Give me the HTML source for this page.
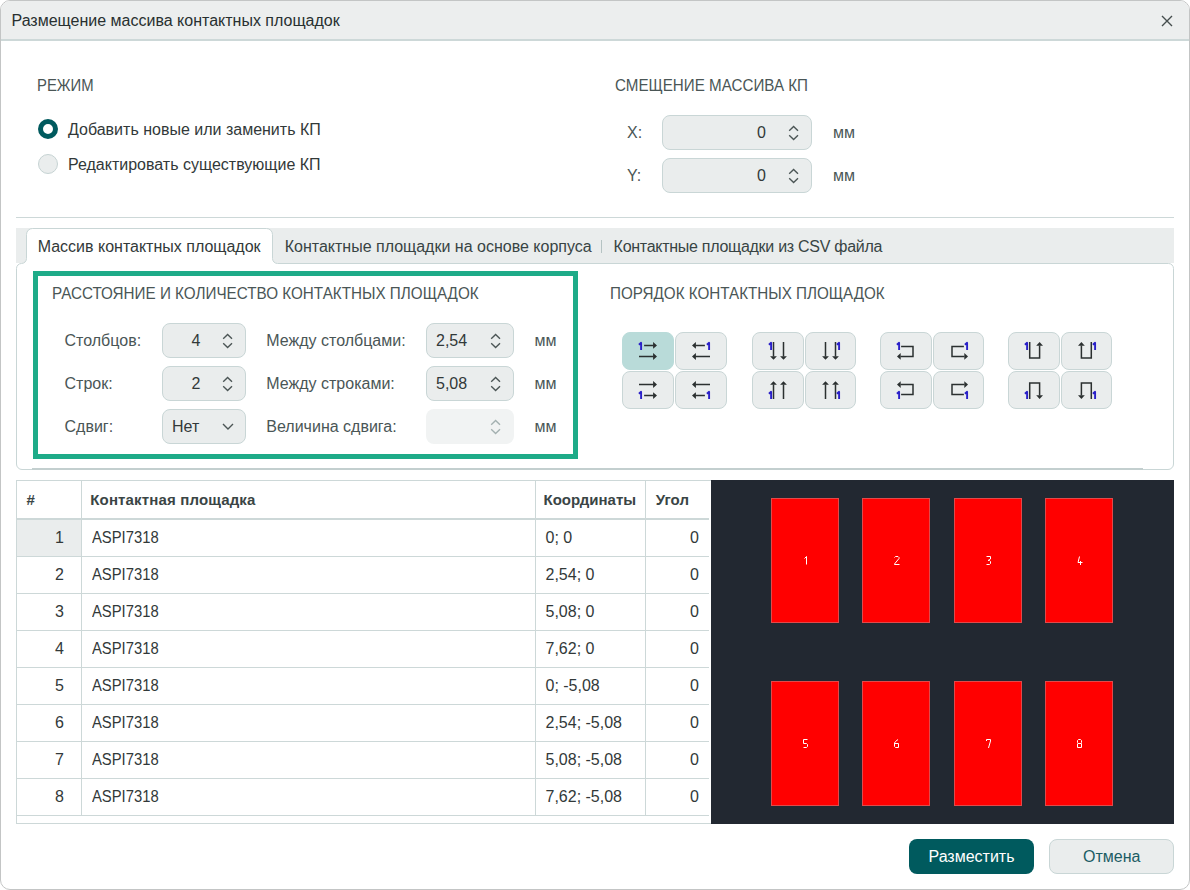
<!DOCTYPE html>
<html><head><meta charset="utf-8">
<style>
*{margin:0;padding:0;box-sizing:border-box}
html,body{width:1190px;height:890px;overflow:hidden;background:#fff;font-family:"Liberation Sans",sans-serif;color:#262f2f}
.a{position:absolute}
.t{position:absolute;white-space:nowrap}
svg{display:block}
</style></head><body>
<div class="a" style="left:0;top:0;width:1190px;height:890px;border:1px solid #c3c5c5;border-radius:10px;background:#fff;overflow:hidden"><div class="a" style="left:0;top:0;width:1188px;height:40px;background:#eceeee;border-bottom:2px solid #cdd8d8"></div></div>
<div class="t" style="top:12.00px;font-size:16px;line-height:18px;color:#283030;font-weight:400;left:11.5px;">Размещение массива контактных площадок</div>
<svg class="a" style="left:1160.5px;top:14.5px" width="12" height="12" viewBox="0 0 12 12"><path d="M1 1 L11 11 M11 1 L1 11" stroke="#454d4d" stroke-width="1.4" fill="none"/></svg>
<div class="t" style="top:77.00px;font-size:16px;line-height:18px;color:#4a5656;font-weight:400;left:36.5px;transform:scaleX(0.93);transform-origin:0 0;">РЕЖИМ</div>
<div class="a" style="left:38.1px;top:119.1px;width:20px;height:20px;border-radius:50%;border:5px solid #005a5e;background:#fff"></div>
<div class="a" style="left:38.1px;top:154.3px;width:20px;height:20px;border-radius:50%;border:1px solid #c6d3d3;background:#eaeded"></div>
<div class="t" style="top:121.00px;font-size:16px;line-height:18px;color:#323939;font-weight:400;left:68px;">Добавить новые или заменить КП</div>
<div class="t" style="top:156.00px;font-size:16px;line-height:18px;color:#323939;font-weight:400;left:68px;">Редактировать существующие КП</div>
<div class="t" style="top:77.00px;font-size:16px;line-height:18px;color:#4a5656;font-weight:400;left:614.5px;transform:scaleX(0.948);transform-origin:0 0;">СМЕЩЕНИЕ МАССИВА КП</div>
<div class="t" style="top:124.00px;font-size:16px;line-height:18px;color:#4a5656;font-weight:400;left:627px;">X:</div>
<div class="a" style="left:662px;top:115px;width:150px;height:35px;background:#eaeded;border:1px solid #c9d6d6;border-radius:8px"></div>
<div class="t" style="top:124.00px;font-size:16px;line-height:18px;color:#323939;font-weight:400;right:424px;">0</div>
<svg class="a" style="left:788px;top:125px" width="12" height="16" viewBox="0 0 12 16"><path d="M1.2 5.8 L5.6 1.4 L10 5.8 M1.2 10.2 L5.6 14.6 L10 10.2" fill="none" stroke="#4b5555" stroke-width="1.35"/></svg>
<div class="t" style="top:124.00px;font-size:16px;line-height:18px;color:#4a5656;font-weight:400;left:833px;">мм</div>
<div class="t" style="top:167.00px;font-size:16px;line-height:18px;color:#4a5656;font-weight:400;left:627px;">Y:</div>
<div class="a" style="left:662px;top:158px;width:150px;height:35px;background:#eaeded;border:1px solid #c9d6d6;border-radius:8px"></div>
<div class="t" style="top:167.00px;font-size:16px;line-height:18px;color:#323939;font-weight:400;right:424px;">0</div>
<svg class="a" style="left:788px;top:168px" width="12" height="16" viewBox="0 0 12 16"><path d="M1.2 5.8 L5.6 1.4 L10 5.8 M1.2 10.2 L5.6 14.6 L10 10.2" fill="none" stroke="#4b5555" stroke-width="1.35"/></svg>
<div class="t" style="top:167.00px;font-size:16px;line-height:18px;color:#4a5656;font-weight:400;left:833px;">мм</div>
<div class="a" style="left:16px;top:217px;width:1158px;height:1px;background:#cdd8d8"></div>
<div class="a" style="left:16px;top:228px;width:1158px;height:35px;background:#eaeded"></div>
<svg class="a" style="left:0;top:0" width="1190" height="480" viewBox="0 0 1190 480"><path d="M16.5 464 V268.5 A5 5 0 0 1 21.5 263.5 A5 5 0 0 0 26.5 258.5 V234.5 A6 6 0 0 1 32.5 228.5 H266.5 A6 6 0 0 1 272.5 234.5 V258.5 A5 5 0 0 0 277.5 263.5 H1168.5 A5 5 0 0 1 1173.5 268.5 V464 A5.5 5.5 0 0 1 1168 469.5 H22 A5.5 5.5 0 0 1 16.5 464 Z" fill="#fff" stroke="#c9d6d6" stroke-width="1"/></svg>
<div class="t" style="top:238.00px;font-size:16px;line-height:18px;color:#323939;font-weight:400;left:37.7px;">Массив контактных площадок</div>
<div class="t" style="top:238.00px;font-size:16px;line-height:18px;color:#384444;font-weight:400;left:284.7px;">Контактные площадки на основе корпуса</div>
<div class="a" style="left:600.5px;top:240px;width:1px;height:13px;background:#b5c3c3"></div>
<div class="t" style="top:238.00px;font-size:16px;line-height:18px;color:#384444;font-weight:400;letter-spacing:-0.28px;left:613.6px;">Контактные площадки из CSV файла</div>
<div class="a" style="left:33px;top:271px;width:545px;height:188px;border:5px solid #1eab88"></div>
<div class="t" style="top:285.00px;font-size:16px;line-height:18px;color:#4a5656;font-weight:400;left:52px;transform:scaleX(0.952);transform-origin:0 0;">РАССТОЯНИЕ И КОЛИЧЕСТВО КОНТАКТНЫХ ПЛОЩАДОК</div>
<div class="t" style="top:332.00px;font-size:16px;line-height:18px;color:#4a5656;font-weight:400;left:64.5px;">Столбцов:</div>
<div class="a" style="left:162px;top:323px;width:84px;height:35px;background:#eaeded;border:1px solid #c9d6d6;border-radius:8px"></div>
<div class="t" style="top:332.00px;font-size:16px;line-height:18px;color:#323939;font-weight:400;right:989.5px;">4</div>
<svg class="a" style="left:222px;top:333px" width="12" height="16" viewBox="0 0 12 16"><path d="M1.2 5.8 L5.6 1.4 L10 5.8 M1.2 10.2 L5.6 14.6 L10 10.2" fill="none" stroke="#4b5555" stroke-width="1.35"/></svg>
<div class="t" style="top:332.00px;font-size:16px;line-height:18px;color:#4a5656;font-weight:400;left:266.3px;">Между столбцами:</div>
<div class="a" style="left:426px;top:323px;width:88px;height:35px;background:#eaeded;border:1px solid #c9d6d6;border-radius:8px"></div>
<div class="t" style="top:332.00px;font-size:16px;line-height:18px;color:#323939;font-weight:400;left:436px;">2,54</div>
<svg class="a" style="left:490px;top:333px" width="12" height="16" viewBox="0 0 12 16"><path d="M1.2 5.8 L5.6 1.4 L10 5.8 M1.2 10.2 L5.6 14.6 L10 10.2" fill="none" stroke="#4b5555" stroke-width="1.35"/></svg>
<div class="t" style="top:332.00px;font-size:16px;line-height:18px;color:#4a5656;font-weight:400;left:534.6px;">мм</div>
<div class="t" style="top:375.00px;font-size:16px;line-height:18px;color:#4a5656;font-weight:400;left:64.5px;">Строк:</div>
<div class="a" style="left:162px;top:366px;width:84px;height:35px;background:#eaeded;border:1px solid #c9d6d6;border-radius:8px"></div>
<div class="t" style="top:375.00px;font-size:16px;line-height:18px;color:#323939;font-weight:400;right:989.5px;">2</div>
<svg class="a" style="left:222px;top:376px" width="12" height="16" viewBox="0 0 12 16"><path d="M1.2 5.8 L5.6 1.4 L10 5.8 M1.2 10.2 L5.6 14.6 L10 10.2" fill="none" stroke="#4b5555" stroke-width="1.35"/></svg>
<div class="t" style="top:375.00px;font-size:16px;line-height:18px;color:#4a5656;font-weight:400;left:266.3px;">Между строками:</div>
<div class="a" style="left:426px;top:366px;width:88px;height:35px;background:#eaeded;border:1px solid #c9d6d6;border-radius:8px"></div>
<div class="t" style="top:375.00px;font-size:16px;line-height:18px;color:#323939;font-weight:400;left:436px;">5,08</div>
<svg class="a" style="left:490px;top:376px" width="12" height="16" viewBox="0 0 12 16"><path d="M1.2 5.8 L5.6 1.4 L10 5.8 M1.2 10.2 L5.6 14.6 L10 10.2" fill="none" stroke="#4b5555" stroke-width="1.35"/></svg>
<div class="t" style="top:375.00px;font-size:16px;line-height:18px;color:#4a5656;font-weight:400;left:534.6px;">мм</div>
<div class="t" style="top:418.00px;font-size:16px;line-height:18px;color:#4a5656;font-weight:400;left:64.5px;">Сдвиг:</div>
<div class="a" style="left:162px;top:409px;width:84px;height:35px;background:#eaeded;border:1px solid #c9d6d6;border-radius:8px"></div>
<div class="t" style="top:418.00px;font-size:16px;line-height:18px;color:#323939;font-weight:400;left:172px;">Нет</div>
<svg class="a" style="left:222px;top:423px" width="12" height="8" viewBox="0 0 12 8"><path d="M1 1 L6 6 L11 1" fill="none" stroke="#4b5555" stroke-width="1.4"/></svg>
<div class="t" style="top:418.00px;font-size:16px;line-height:18px;color:#4a5656;font-weight:400;left:266.3px;">Величина сдвига:</div>
<div class="a" style="left:426px;top:409px;width:88px;height:35px;background:#f1f3f3;border-radius:8px"></div>
<svg class="a" style="left:490px;top:419px" width="12" height="16" viewBox="0 0 12 16"><path d="M1.2 5.8 L5.6 1.4 L10 5.8 M1.2 10.2 L5.6 14.6 L10 10.2" fill="none" stroke="#a3b0b0" stroke-width="1.35"/></svg>
<div class="t" style="top:418.00px;font-size:16px;line-height:18px;color:#4a5656;font-weight:400;left:534.6px;">мм</div>
<div class="t" style="top:285.00px;font-size:16px;line-height:18px;color:#4a5656;font-weight:400;left:610px;transform:scaleX(0.95);transform-origin:0 0;">ПОРЯДОК КОНТАКТНЫХ ПЛОЩАДОК</div>
<div class="a" style="left:622.1px;top:332px;width:51.6px;height:37.7px;background:#b9dbd9;border:1px solid #b9dbd9;border-radius:8px"></div>
<svg class="a" style="left:632.90px;top:335.85px" width="30" height="30" viewBox="-15 -15 30 30"><path d="M-3.90 -5.60 L5.60 -5.60 M-9.00 5.50 L5.60 5.50" stroke="#2b3030" stroke-width="1.5" fill="none"/><path d="M9.00 -5.60 L5.10 -9.00 L5.10 -2.20 Z M9.00 5.50 L5.10 2.10 L5.10 8.90 Z" fill="#2b3030"/><path d="M-9.10 -6.30 L-6.90 -8.20 L-6.90 -1.10" stroke="#2a20c8" stroke-width="1.9" fill="none" stroke-linejoin="round"/></svg>
<div class="a" style="left:675.2px;top:332px;width:51.6px;height:37.7px;background:#eaeded;border:1px solid #c9d6d6;border-radius:8px"></div>
<svg class="a" style="left:686.00px;top:335.85px" width="30" height="30" viewBox="-15 -15 30 30"><path d="M3.90 -5.60 L-5.60 -5.60 M9.00 5.50 L-5.60 5.50" stroke="#2b3030" stroke-width="1.5" fill="none"/><path d="M-9.00 -5.60 L-5.10 -9.00 L-5.10 -2.20 Z M-9.00 5.50 L-5.10 2.10 L-5.10 8.90 Z" fill="#2b3030"/><path d="M5.90 -6.30 L8.10 -8.20 L8.10 -1.10" stroke="#2a20c8" stroke-width="1.9" fill="none" stroke-linejoin="round"/></svg>
<div class="a" style="left:622.1px;top:371px;width:51.6px;height:37.7px;background:#eaeded;border:1px solid #c9d6d6;border-radius:8px"></div>
<svg class="a" style="left:632.90px;top:374.85px" width="30" height="30" viewBox="-15 -15 30 30"><path d="M-3.90 5.60 L5.60 5.60 M-9.00 -5.50 L5.60 -5.50" stroke="#2b3030" stroke-width="1.5" fill="none"/><path d="M9.00 5.60 L5.10 9.00 L5.10 2.20 Z M9.00 -5.50 L5.10 -2.10 L5.10 -8.90 Z" fill="#2b3030"/><path d="M-9.10 3.70 L-6.90 1.80 L-6.90 8.90" stroke="#2a20c8" stroke-width="1.9" fill="none" stroke-linejoin="round"/></svg>
<div class="a" style="left:675.2px;top:371px;width:51.6px;height:37.7px;background:#eaeded;border:1px solid #c9d6d6;border-radius:8px"></div>
<svg class="a" style="left:686.00px;top:374.85px" width="30" height="30" viewBox="-15 -15 30 30"><path d="M3.90 5.60 L-5.60 5.60 M9.00 -5.50 L-5.60 -5.50" stroke="#2b3030" stroke-width="1.5" fill="none"/><path d="M-9.00 5.60 L-5.10 9.00 L-5.10 2.20 Z M-9.00 -5.50 L-5.10 -2.10 L-5.10 -8.90 Z" fill="#2b3030"/><path d="M5.90 3.70 L8.10 1.80 L8.10 8.90" stroke="#2a20c8" stroke-width="1.9" fill="none" stroke-linejoin="round"/></svg>
<div class="a" style="left:752.2px;top:332px;width:51.6px;height:37.7px;background:#eaeded;border:1px solid #c9d6d6;border-radius:8px"></div>
<svg class="a" style="left:763.00px;top:335.85px" width="30" height="30" viewBox="-15 -15 30 30"><path d="M-4.50 -9.00 L-4.50 5.60 M5.50 -9.00 L5.50 5.60" stroke="#2b3030" stroke-width="1.5" fill="none"/><path d="M-4.50 8.80 L-7.90 5.20 L-1.10 5.20 Z M5.50 8.80 L2.10 5.20 L8.90 5.20 Z" fill="#2b3030"/><path d="M-9.10 -6.30 L-6.90 -8.20 L-6.90 -1.10" stroke="#2a20c8" stroke-width="1.9" fill="none" stroke-linejoin="round"/></svg>
<div class="a" style="left:804.7px;top:332px;width:51.6px;height:37.7px;background:#eaeded;border:1px solid #c9d6d6;border-radius:8px"></div>
<svg class="a" style="left:815.50px;top:335.85px" width="30" height="30" viewBox="-15 -15 30 30"><path d="M4.50 -9.00 L4.50 5.60 M-5.50 -9.00 L-5.50 5.60" stroke="#2b3030" stroke-width="1.5" fill="none"/><path d="M4.50 8.80 L7.90 5.20 L1.10 5.20 Z M-5.50 8.80 L-2.10 5.20 L-8.90 5.20 Z" fill="#2b3030"/><path d="M5.90 -6.30 L8.10 -8.20 L8.10 -1.10" stroke="#2a20c8" stroke-width="1.9" fill="none" stroke-linejoin="round"/></svg>
<div class="a" style="left:752.2px;top:371px;width:51.6px;height:37.7px;background:#eaeded;border:1px solid #c9d6d6;border-radius:8px"></div>
<svg class="a" style="left:763.00px;top:374.85px" width="30" height="30" viewBox="-15 -15 30 30"><path d="M-4.50 9.00 L-4.50 -5.60 M5.50 9.00 L5.50 -5.60" stroke="#2b3030" stroke-width="1.5" fill="none"/><path d="M-4.50 -8.80 L-7.90 -5.20 L-1.10 -5.20 Z M5.50 -8.80 L2.10 -5.20 L8.90 -5.20 Z" fill="#2b3030"/><path d="M-9.10 3.70 L-6.90 1.80 L-6.90 8.90" stroke="#2a20c8" stroke-width="1.9" fill="none" stroke-linejoin="round"/></svg>
<div class="a" style="left:804.7px;top:371px;width:51.6px;height:37.7px;background:#eaeded;border:1px solid #c9d6d6;border-radius:8px"></div>
<svg class="a" style="left:815.50px;top:374.85px" width="30" height="30" viewBox="-15 -15 30 30"><path d="M4.50 9.00 L4.50 -5.60 M-5.50 9.00 L-5.50 -5.60" stroke="#2b3030" stroke-width="1.5" fill="none"/><path d="M4.50 -8.80 L7.90 -5.20 L1.10 -5.20 Z M-5.50 -8.80 L-2.10 -5.20 L-8.90 -5.20 Z" fill="#2b3030"/><path d="M5.90 3.70 L8.10 1.80 L8.10 8.90" stroke="#2a20c8" stroke-width="1.9" fill="none" stroke-linejoin="round"/></svg>
<div class="a" style="left:880.3px;top:332px;width:51.6px;height:37.7px;background:#eaeded;border:1px solid #c9d6d6;border-radius:8px"></div>
<svg class="a" style="left:891.10px;top:335.85px" width="30" height="30" viewBox="-15 -15 30 30"><path d="M-4.90 -4.40 L7.00 -4.40 L7.00 5.40 L-5.50 5.40" stroke="#2b3030" stroke-width="1.5" fill="none"/><path d="M-9.00 5.40 L-5.30 2.10 L-5.30 8.70 Z" fill="#2b3030"/><path d="M-9.10 -6.30 L-6.90 -8.20 L-6.90 -1.10" stroke="#2a20c8" stroke-width="1.9" fill="none" stroke-linejoin="round"/></svg>
<div class="a" style="left:932.7px;top:332px;width:51.6px;height:37.7px;background:#eaeded;border:1px solid #c9d6d6;border-radius:8px"></div>
<svg class="a" style="left:943.50px;top:335.85px" width="30" height="30" viewBox="-15 -15 30 30"><path d="M4.90 -4.40 L-7.00 -4.40 L-7.00 5.40 L5.50 5.40" stroke="#2b3030" stroke-width="1.5" fill="none"/><path d="M9.00 5.40 L5.30 2.10 L5.30 8.70 Z" fill="#2b3030"/><path d="M5.90 -6.30 L8.10 -8.20 L8.10 -1.10" stroke="#2a20c8" stroke-width="1.9" fill="none" stroke-linejoin="round"/></svg>
<div class="a" style="left:880.3px;top:371px;width:51.6px;height:37.7px;background:#eaeded;border:1px solid #c9d6d6;border-radius:8px"></div>
<svg class="a" style="left:891.10px;top:374.85px" width="30" height="30" viewBox="-15 -15 30 30"><path d="M-4.90 4.40 L7.00 4.40 L7.00 -5.40 L-5.50 -5.40" stroke="#2b3030" stroke-width="1.5" fill="none"/><path d="M-9.00 -5.40 L-5.30 -2.10 L-5.30 -8.70 Z" fill="#2b3030"/><path d="M-9.10 3.70 L-6.90 1.80 L-6.90 8.90" stroke="#2a20c8" stroke-width="1.9" fill="none" stroke-linejoin="round"/></svg>
<div class="a" style="left:932.7px;top:371px;width:51.6px;height:37.7px;background:#eaeded;border:1px solid #c9d6d6;border-radius:8px"></div>
<svg class="a" style="left:943.50px;top:374.85px" width="30" height="30" viewBox="-15 -15 30 30"><path d="M4.90 4.40 L-7.00 4.40 L-7.00 -5.40 L5.50 -5.40" stroke="#2b3030" stroke-width="1.5" fill="none"/><path d="M9.00 -5.40 L5.30 -2.10 L5.30 -8.70 Z" fill="#2b3030"/><path d="M5.90 3.70 L8.10 1.80 L8.10 8.90" stroke="#2a20c8" stroke-width="1.9" fill="none" stroke-linejoin="round"/></svg>
<div class="a" style="left:1008.1px;top:332px;width:51.6px;height:37.7px;background:#eaeded;border:1px solid #c9d6d6;border-radius:8px"></div>
<svg class="a" style="left:1018.90px;top:335.85px" width="30" height="30" viewBox="-15 -15 30 30"><path d="M-4.30 -9.00 L-4.30 6.90 L5.60 6.90 L5.60 -5.60" stroke="#2b3030" stroke-width="1.5" fill="none"/><path d="M5.60 -9.00 L2.20 -5.30 L9.00 -5.30 Z" fill="#2b3030"/><path d="M-9.10 -6.30 L-6.90 -8.20 L-6.90 -1.10" stroke="#2a20c8" stroke-width="1.9" fill="none" stroke-linejoin="round"/></svg>
<div class="a" style="left:1060.7px;top:332px;width:51.6px;height:37.7px;background:#eaeded;border:1px solid #c9d6d6;border-radius:8px"></div>
<svg class="a" style="left:1071.50px;top:335.85px" width="30" height="30" viewBox="-15 -15 30 30"><path d="M4.30 -9.00 L4.30 6.90 L-5.60 6.90 L-5.60 -5.60" stroke="#2b3030" stroke-width="1.5" fill="none"/><path d="M-5.60 -9.00 L-2.20 -5.30 L-9.00 -5.30 Z" fill="#2b3030"/><path d="M5.90 -6.30 L8.10 -8.20 L8.10 -1.10" stroke="#2a20c8" stroke-width="1.9" fill="none" stroke-linejoin="round"/></svg>
<div class="a" style="left:1008.1px;top:371px;width:51.6px;height:37.7px;background:#eaeded;border:1px solid #c9d6d6;border-radius:8px"></div>
<svg class="a" style="left:1018.90px;top:374.85px" width="30" height="30" viewBox="-15 -15 30 30"><path d="M-4.30 9.00 L-4.30 -6.90 L5.60 -6.90 L5.60 5.60" stroke="#2b3030" stroke-width="1.5" fill="none"/><path d="M5.60 9.00 L2.20 5.30 L9.00 5.30 Z" fill="#2b3030"/><path d="M-9.10 3.70 L-6.90 1.80 L-6.90 8.90" stroke="#2a20c8" stroke-width="1.9" fill="none" stroke-linejoin="round"/></svg>
<div class="a" style="left:1060.7px;top:371px;width:51.6px;height:37.7px;background:#eaeded;border:1px solid #c9d6d6;border-radius:8px"></div>
<svg class="a" style="left:1071.50px;top:374.85px" width="30" height="30" viewBox="-15 -15 30 30"><path d="M4.30 9.00 L4.30 -6.90 L-5.60 -6.90 L-5.60 5.60" stroke="#2b3030" stroke-width="1.5" fill="none"/><path d="M-5.60 9.00 L-2.20 5.30 L-9.00 5.30 Z" fill="#2b3030"/><path d="M5.90 3.70 L8.10 1.80 L8.10 8.90" stroke="#2a20c8" stroke-width="1.9" fill="none" stroke-linejoin="round"/></svg>
<div class="a" style="left:32px;top:468px;width:1111px;height:2px;background:#c3cfcf"></div>
<div class="a" style="left:16px;top:480px;width:695px;height:344px;border:1px solid #cdd8d8;border-right:none"></div>
<div class="a" style="left:17px;top:518px;width:692px;height:2px;background:#cdd8d8"></div>
<div class="a" style="left:17px;top:556px;width:692px;height:1px;background:#cdd8d8"></div>
<div class="a" style="left:17px;top:593px;width:692px;height:1px;background:#cdd8d8"></div>
<div class="a" style="left:17px;top:630px;width:692px;height:1px;background:#cdd8d8"></div>
<div class="a" style="left:17px;top:667px;width:692px;height:1px;background:#cdd8d8"></div>
<div class="a" style="left:17px;top:704px;width:692px;height:1px;background:#cdd8d8"></div>
<div class="a" style="left:17px;top:741px;width:692px;height:1px;background:#cdd8d8"></div>
<div class="a" style="left:17px;top:778px;width:692px;height:1px;background:#cdd8d8"></div>
<div class="a" style="left:17px;top:815px;width:692px;height:1px;background:#cdd8d8"></div>
<div class="a" style="left:81px;top:481px;width:1px;height:335px;background:#cdd8d8"></div>
<div class="a" style="left:535px;top:481px;width:1px;height:335px;background:#cdd8d8"></div>
<div class="a" style="left:645px;top:481px;width:1px;height:335px;background:#cdd8d8"></div>
<div class="a" style="left:17px;top:520px;width:64px;height:36px;background:#eaeded"></div>
<div class="t" style="top:491.00px;font-size:15px;line-height:17px;color:#3a4545;font-weight:700;left:26.6px;">#</div>
<div class="t" style="top:491.00px;font-size:15px;line-height:17px;color:#3a4545;font-weight:700;letter-spacing:0.15px;left:90.3px;">Контактная площадка</div>
<div class="t" style="top:491.00px;font-size:15px;line-height:17px;color:#3a4545;font-weight:700;left:543.5px;">Координаты</div>
<div class="t" style="top:491.00px;font-size:15px;line-height:17px;color:#3a4545;font-weight:700;left:655.8px;">Угол</div>
<div class="t" style="top:529.00px;font-size:16px;line-height:18px;color:#323939;font-weight:400;right:1126px;">1</div>
<div class="t" style="top:529.00px;font-size:16px;line-height:18px;color:#323939;font-weight:400;left:92.3px;transform:scaleX(0.925);transform-origin:0 0;">ASPI7318</div>
<div class="t" style="top:529.00px;font-size:16px;line-height:18px;color:#323939;font-weight:400;left:545.5px;">0; 0</div>
<div class="t" style="top:529.00px;font-size:16px;line-height:18px;color:#323939;font-weight:400;right:491px;">0</div>
<div class="t" style="top:566.00px;font-size:16px;line-height:18px;color:#323939;font-weight:400;right:1126px;">2</div>
<div class="t" style="top:566.00px;font-size:16px;line-height:18px;color:#323939;font-weight:400;left:92.3px;transform:scaleX(0.925);transform-origin:0 0;">ASPI7318</div>
<div class="t" style="top:566.00px;font-size:16px;line-height:18px;color:#323939;font-weight:400;left:545.5px;">2,54; 0</div>
<div class="t" style="top:566.00px;font-size:16px;line-height:18px;color:#323939;font-weight:400;right:491px;">0</div>
<div class="t" style="top:603.00px;font-size:16px;line-height:18px;color:#323939;font-weight:400;right:1126px;">3</div>
<div class="t" style="top:603.00px;font-size:16px;line-height:18px;color:#323939;font-weight:400;left:92.3px;transform:scaleX(0.925);transform-origin:0 0;">ASPI7318</div>
<div class="t" style="top:603.00px;font-size:16px;line-height:18px;color:#323939;font-weight:400;left:545.5px;">5,08; 0</div>
<div class="t" style="top:603.00px;font-size:16px;line-height:18px;color:#323939;font-weight:400;right:491px;">0</div>
<div class="t" style="top:640.00px;font-size:16px;line-height:18px;color:#323939;font-weight:400;right:1126px;">4</div>
<div class="t" style="top:640.00px;font-size:16px;line-height:18px;color:#323939;font-weight:400;left:92.3px;transform:scaleX(0.925);transform-origin:0 0;">ASPI7318</div>
<div class="t" style="top:640.00px;font-size:16px;line-height:18px;color:#323939;font-weight:400;left:545.5px;">7,62; 0</div>
<div class="t" style="top:640.00px;font-size:16px;line-height:18px;color:#323939;font-weight:400;right:491px;">0</div>
<div class="t" style="top:677.00px;font-size:16px;line-height:18px;color:#323939;font-weight:400;right:1126px;">5</div>
<div class="t" style="top:677.00px;font-size:16px;line-height:18px;color:#323939;font-weight:400;left:92.3px;transform:scaleX(0.925);transform-origin:0 0;">ASPI7318</div>
<div class="t" style="top:677.00px;font-size:16px;line-height:18px;color:#323939;font-weight:400;left:545.5px;">0; -5,08</div>
<div class="t" style="top:677.00px;font-size:16px;line-height:18px;color:#323939;font-weight:400;right:491px;">0</div>
<div class="t" style="top:714.00px;font-size:16px;line-height:18px;color:#323939;font-weight:400;right:1126px;">6</div>
<div class="t" style="top:714.00px;font-size:16px;line-height:18px;color:#323939;font-weight:400;left:92.3px;transform:scaleX(0.925);transform-origin:0 0;">ASPI7318</div>
<div class="t" style="top:714.00px;font-size:16px;line-height:18px;color:#323939;font-weight:400;left:545.5px;">2,54; -5,08</div>
<div class="t" style="top:714.00px;font-size:16px;line-height:18px;color:#323939;font-weight:400;right:491px;">0</div>
<div class="t" style="top:751.00px;font-size:16px;line-height:18px;color:#323939;font-weight:400;right:1126px;">7</div>
<div class="t" style="top:751.00px;font-size:16px;line-height:18px;color:#323939;font-weight:400;left:92.3px;transform:scaleX(0.925);transform-origin:0 0;">ASPI7318</div>
<div class="t" style="top:751.00px;font-size:16px;line-height:18px;color:#323939;font-weight:400;left:545.5px;">5,08; -5,08</div>
<div class="t" style="top:751.00px;font-size:16px;line-height:18px;color:#323939;font-weight:400;right:491px;">0</div>
<div class="t" style="top:788.00px;font-size:16px;line-height:18px;color:#323939;font-weight:400;right:1126px;">8</div>
<div class="t" style="top:788.00px;font-size:16px;line-height:18px;color:#323939;font-weight:400;left:92.3px;transform:scaleX(0.925);transform-origin:0 0;">ASPI7318</div>
<div class="t" style="top:788.00px;font-size:16px;line-height:18px;color:#323939;font-weight:400;left:545.5px;">7,62; -5,08</div>
<div class="t" style="top:788.00px;font-size:16px;line-height:18px;color:#323939;font-weight:400;right:491px;">0</div>
<div class="a" style="left:711px;top:480px;width:463px;height:344px;background:#222831"></div>
<svg class="a" style="left:711px;top:480px" width="463" height="344" viewBox="711 480 463 344"><rect x="771.5" y="498.5" width="67" height="124" fill="#ff0000" stroke="#e04a4a" stroke-width="1"/><rect x="862.5" y="498.5" width="67" height="124" fill="#ff0000" stroke="#e04a4a" stroke-width="1"/><rect x="954.5" y="498.5" width="67" height="124" fill="#ff0000" stroke="#e04a4a" stroke-width="1"/><rect x="1045.5" y="498.5" width="67" height="124" fill="#ff0000" stroke="#e04a4a" stroke-width="1"/><rect x="771.5" y="681.5" width="67" height="124" fill="#ff0000" stroke="#e04a4a" stroke-width="1"/><rect x="862.5" y="681.5" width="67" height="124" fill="#ff0000" stroke="#e04a4a" stroke-width="1"/><rect x="954.5" y="681.5" width="67" height="124" fill="#ff0000" stroke="#e04a4a" stroke-width="1"/><rect x="1045.5" y="681.5" width="67" height="124" fill="#ff0000" stroke="#e04a4a" stroke-width="1"/></svg>
<svg class="a" style="left:0;top:0" width="1190" height="890" viewBox="0 0 1190 890"><path transform="translate(803,556)" d="M1.5 2.5 L3.5 0.5 V8.5" stroke="#fff" stroke-width="1" fill="none"/><path transform="translate(894,556)" d="M0.5 1.5 L1.5 0.5 H4 L5 1.5 V2.5 L0.5 8 V8.5 H5.5" stroke="#fff" stroke-width="1" fill="none"/><path transform="translate(986,556)" d="M0.5 0.5 H4.5 V3 L2 4.5 H3.5 L4.5 5.5 V7.5 L3.5 8.5 H0.5" stroke="#fff" stroke-width="1" fill="none"/><path transform="translate(1077,556)" d="M2.5 0.5 L1 6.5 H5.5 M3.5 5 V9" stroke="#fff" stroke-width="1" fill="none"/><path transform="translate(803,739)" d="M4.5 0.5 H0.5 V4.5 H3.5 L4.5 5.5 V7.5 L3.5 8.5 H0.5" stroke="#fff" stroke-width="1" fill="none"/><path transform="translate(894,739)" d="M4 0.5 L1.5 2.5 L0.5 4 V7.5 L1.5 8.5 H4.5 V4.5 H0.5" stroke="#fff" stroke-width="1" fill="none"/><path transform="translate(986,739)" d="M0.5 2 V0.5 H4.5 V2 L2.5 9" stroke="#fff" stroke-width="1" fill="none"/><path transform="translate(1077,739)" d="M1.5 0.5 H3.5 L4.5 1.5 V3.5 L3.5 4.5 H1.5 L0.5 3.5 V1.5 Z M1 4.5 H4.5 V8.5 H0.5 V4.5" stroke="#fff" stroke-width="1" fill="none"/></svg>
<div class="a" style="left:909px;top:839px;width:125px;height:35px;background:#005a5e;border-radius:8px"></div>
<div class="t" style="top:848.00px;font-size:16px;line-height:18px;color:#ffffff;font-weight:400;left:928.5px;">Разместить</div>
<div class="a" style="left:1049px;top:839px;width:125px;height:35px;background:#eaeded;border:1px solid #c9d6d6;border-radius:8px"></div>
<div class="t" style="top:848.00px;font-size:16px;line-height:18px;color:#1b5c64;font-weight:400;left:1083px;">Отмена</div>
</body></html>
